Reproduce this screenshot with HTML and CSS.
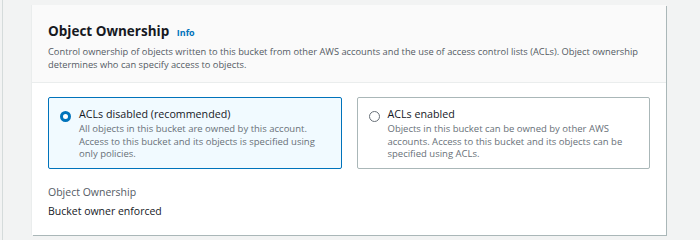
FILE: index.html
```html
<!DOCTYPE html>
<html lang="en">
<head>
<meta charset="utf-8">
<link rel="stylesheet" href="styles.css">
</head>
<body>
<div class="page">
  <div class="gutter"><div class="rule"></div></div>
  <section class="card">
    <header class="card-header">
      <h2 class="title">Object Ownership <a class="info">Info</a></h2>
      <p class="desc">Control ownership of objects written to this bucket from other AWS accounts and the use of access control lists (ACLs). Object ownership<br>determines who can specify access to objects.</p>
    </header>
    <div class="card-body">
      <div class="tiles">
        <div class="tile selected">
          <span class="radio"></span>
          <div class="tile-text">
            <div class="tile-label">ACLs disabled (recommended)</div>
            <div class="tile-desc">All objects in this bucket are owned by this account.<br>Access to this bucket and its objects is specified using<br>only policies.</div>
          </div>
        </div>
        <div class="tile">
          <span class="radio"></span>
          <div class="tile-text">
            <div class="tile-label">ACLs enabled</div>
            <div class="tile-desc">Objects in this bucket can be owned by other AWS<br>accounts. Access to this bucket and its objects can be<br>specified using ACLs.</div>
          </div>
        </div>
      </div>
      <dl class="kv">
        <dt>Object Ownership</dt>
        <dd>Bucket owner enforced</dd>
      </dl>
    </div>
  </section>
</div>
</body>
</html>
```
FILE: styles.css
```css
* { box-sizing: border-box; }
html, body { margin: 0; padding: 0; }
body {
  background: #f2f3f3;
  font-family: "Open Sans", "Noto Sans", sans-serif;
  color: #16191f;
  width: 700px;
  height: 240px;
  overflow: hidden;
}
.page {
  display: flex;
  align-items: flex-start;
}
.gutter {
  width: 32px;
  height: 240px;
  flex: none;
  padding-left: 2px;
}
.rule {
  width: 1px;
  height: 100%;
  background: #d5dbdb;
}
.card {
  margin-top: 5px;
  width: 634px;
  height: 230px;
  background: #fff;
  box-shadow: 1px 1px 0 0 #aab7b8, -1px 0 0 0 #eaeded;
  display: flex;
  flex-direction: column;
}
.card-header {
  background: #fafafa;
  border-bottom: 1px solid #eaeded;
  padding: 17px 16px 0 16px;
  height: 78px;
}
.title {
  margin: 0;
  font-size: 13.5px;
  font-weight: 700;
  line-height: 19px;
  color: #16191f;
}
.info {
  font-size: 9px;
  font-weight: 700;
  color: #0073bb;
  margin-left: 4px;
}
.desc {
  margin: 3px 0 0 0;
  font-size: 9.3px;
  line-height: 13px;
  color: #545b64;
  white-space: nowrap;
}
.card-body {
  padding: 14px 16px 0 16px;
}
.tiles {
  display: flex;
  gap: 15px;
}
.tile {
  flex: 1;
  height: 72px;
  border: 1px solid #aab7b8;
  border-radius: 2px;
  background: #fff;
  display: flex;
  align-items: flex-start;
  padding: 9px 11px 0 11px;
  gap: 8px;
}
.tile.selected {
  background: #f1faff;
  border-color: #0073bb;
}
.radio {
  width: 11px;
  height: 11px;
  border-radius: 50%;
  border: 1px solid #687078;
  background: #fff;
  margin-top: 4px;
  flex: none;
}
.tile.selected .radio {
  border: 3.5px solid #0073bb;
}
.tile-label {
  font-size: 10.7px;
  line-height: 15px;
  color: #16191f;
}
.tile-desc {
  font-size: 9.5px;
  line-height: 12.7px;
  color: #687078;
  margin-top: 1px;
}
.kv {
  margin: 14px 0 0 0;
}
.kv dt {
  font-size: 10.5px;
  line-height: 19px;
  color: #545b64;
}
.kv dd {
  margin: 0;
  font-size: 10.5px;
  line-height: 19px;
  color: #16191f;
}
```
